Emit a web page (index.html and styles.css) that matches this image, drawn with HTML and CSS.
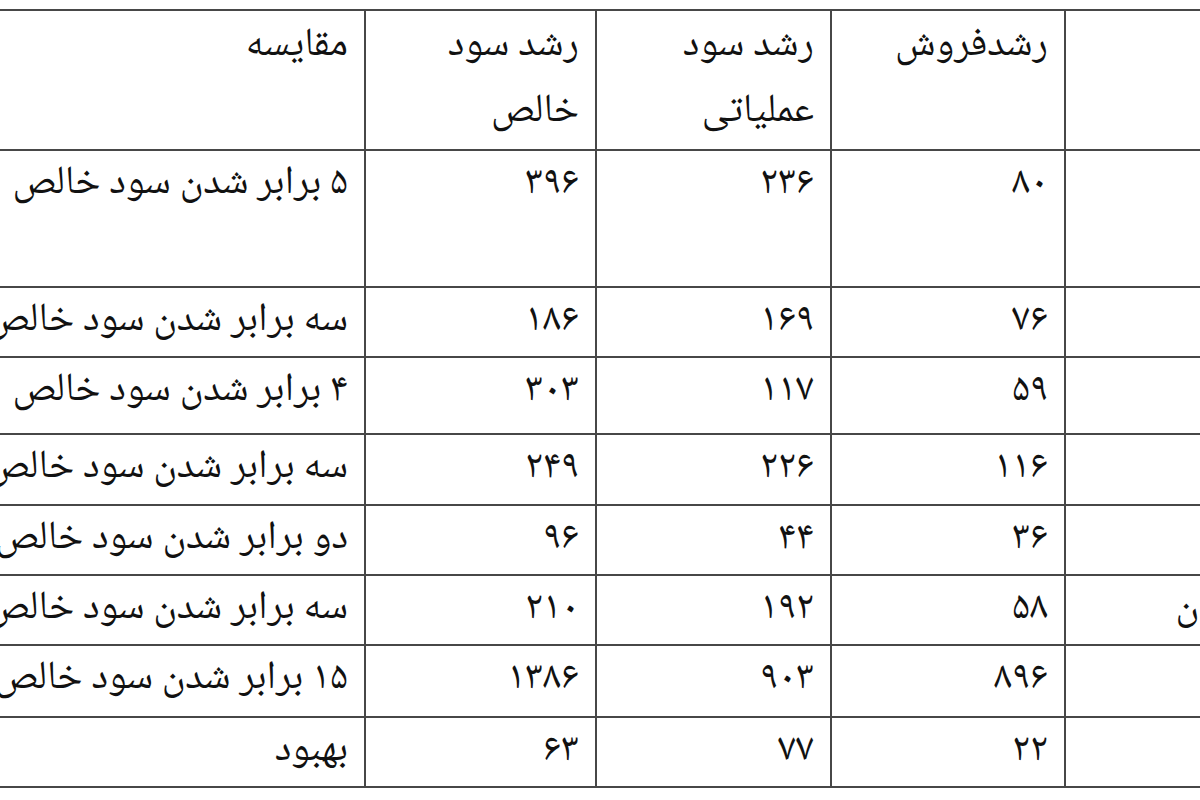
FILE: index.html
```html
<!DOCTYPE html>
<html lang="fa" dir="rtl">
<head>
<meta charset="utf-8">
<title>مقایسه رشد</title>
<link rel="stylesheet" href="styles.css">
</head>
<body>
<div class="frame">
  <table class="growth">
    <colgroup>
      <col class="c-name">
      <col class="c-sales">
      <col class="c-op">
      <col class="c-net">
      <col class="c-cmp">
    </colgroup>
    <tr class="r-head">
      <td></td>
      <td>رشدفروش</td>
      <td>رشد سود<br>عملیاتی</td>
      <td>رشد سود<br>خالص</td>
      <td>مقایسه</td>
    </tr>
    <tr class="r-tall">
      <td></td>
      <td>۸۰</td>
      <td>۲۳۶</td>
      <td>۳۹۶</td>
      <td>۵ برابر شدن سود خالص</td>
    </tr>
    <tr class="r-70">
      <td></td>
      <td>۷۶</td>
      <td>۱۶۹</td>
      <td>۱۸۶</td>
      <td>سه برابر شدن سود خالص</td>
    </tr>
    <tr class="r-77">
      <td></td>
      <td>۵۹</td>
      <td>۱۱۷</td>
      <td>۳۰۳</td>
      <td>۴ برابر شدن سود خالص</td>
    </tr>
    <tr class="r-71">
      <td></td>
      <td>۱۱۶</td>
      <td>۲۲۶</td>
      <td>۲۴۹</td>
      <td>سه برابر شدن سود خالص</td>
    </tr>
    <tr class="r-70">
      <td></td>
      <td>۳۶</td>
      <td>۴۴</td>
      <td>۹۶</td>
      <td>دو برابر شدن سود خالص</td>
    </tr>
    <tr class="r-70">
      <td class="name">کرمان</td>
      <td>۵۸</td>
      <td>۱۹۲</td>
      <td>۲۱۰</td>
      <td>سه برابر شدن سود خالص</td>
    </tr>
    <tr class="r-72">
      <td></td>
      <td>۸۹۶</td>
      <td>۹۰۳</td>
      <td>۱۳۸۶</td>
      <td>۱۵ برابر شدن سود خالص</td>
    </tr>
    <tr class="r-70">
      <td></td>
      <td>۲۲</td>
      <td>۷۷</td>
      <td>۶۳</td>
      <td>بهبود</td>
    </tr>
  </table>
</div>
</body>
</html>
```

FILE: styles.css
```css
html, body {
  margin: 0;
  padding: 0;
  background: #ffffff;
}

.frame {
  width: 1200px;
  height: 800px;
  overflow: hidden;
  direction: rtl;
  padding-top: 9px;
  box-sizing: border-box;
}

.growth {
  border-collapse: collapse;
  table-layout: fixed;
  width: 1354px;
  margin-right: -100px;
  font-family: "Noto Naskh Arabic", "DejaVu Sans", sans-serif;
  font-size: 40px;
  color: #111111;
}

.c-name { width: 234px; }
.c-sales { width: 234px; }
.c-op { width: 235px; }
.c-net { width: 231px; }
.c-cmp { width: 420px; }

.growth td {
  border: 2px solid #474747;
  padding: 0 16px;
  line-height: 66px;
  vertical-align: top;
  text-align: right;
  white-space: nowrap;
  overflow: hidden;
}

.r-head td { height: 136px; padding-top: 2px; }
.r-tall td { height: 135px; }
.r-70 td { height: 68px; }
.r-71 td { height: 69px; }
.r-72 td { height: 70px; }
.r-77 td { height: 75px; }

.growth td.name {
  padding-right: 38px;
}
```
